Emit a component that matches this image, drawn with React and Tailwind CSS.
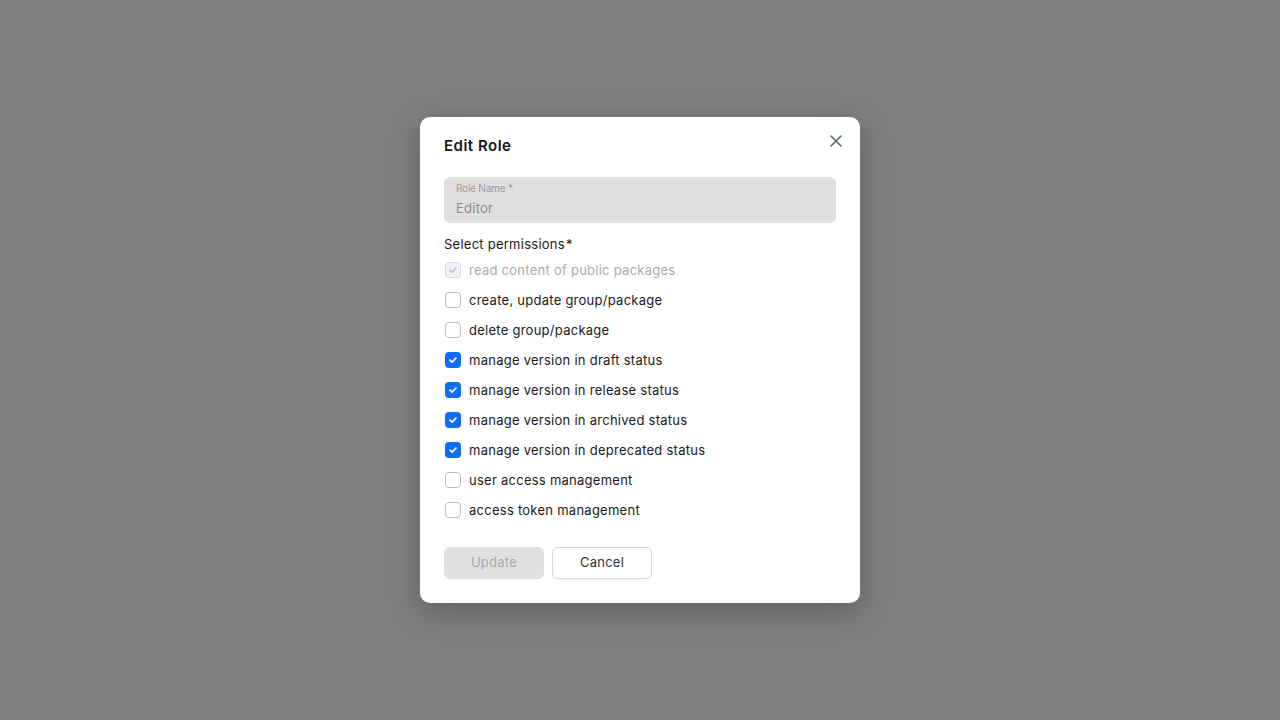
import React from "react";

const perms = [
  { label: "read content of public packages", state: "disabled" },
  { label: "create, update group/package", state: "off" },
  { label: "delete group/package", state: "off" },
  { label: "manage version in draft status", state: "on" },
  { label: "manage version in release status", state: "on" },
  { label: "manage version in archived status", state: "on" },
  { label: "manage version in deprecated status", state: "on" },
  { label: "user access management", state: "off" },
  { label: "access token management", state: "off" },
];

function Box({ state }) {
  if (state === "on") {
    return (
      <span className="w-4 h-4 rounded-[4px] bg-[#0d6efd] flex items-center justify-center">
        <svg width="10" height="10" viewBox="0 0 10 10" fill="none">
          <path d="M2 5.2L4.1 7.2L8 3" stroke="white" strokeWidth="1.7" strokeLinecap="round" strokeLinejoin="round" />
        </svg>
      </span>
    );
  }
  if (state === "disabled") {
    return (
      <span className="w-4 h-4 rounded-[4px] border border-[#d6d8dd] bg-[#f1f2f4] flex items-center justify-center">
        <svg width="10" height="10" viewBox="0 0 10 10" fill="none">
          <path d="M2 5.2L4.1 7.2L8 3" stroke="#b9bcc2" strokeWidth="1.5" strokeLinecap="round" strokeLinejoin="round" />
        </svg>
      </span>
    );
  }
  return <span className="w-4 h-4 rounded-[4px] border border-[#b9bec8] bg-white" />;
}

export default function App() {
  return (
    <div
      className="w-[1280px] h-[720px] bg-[#7f7f80] flex items-center justify-center"
      style={{ fontFamily: "Inter, 'Noto Sans', sans-serif" }}
    >
      <div className="w-[440px] bg-white rounded-[10px] shadow-[0_8px_30px_rgba(0,0,0,0.25)] px-6 pt-[19px] pb-6 relative">
        <button className="absolute right-[17px] top-[17px] text-[#5b6675]">
          <svg width="14" height="14" viewBox="0 0 14 14" fill="none">
            <path d="M2 2L12 12M12 2L2 12" stroke="currentColor" strokeWidth="1.6" strokeLinecap="round" />
          </svg>
        </button>
        <div className="text-[15px] font-semibold text-[#141414] leading-[20px] tracking-[0.5px]">Edit Role</div>
        <div className="mt-[21px] h-[46px] bg-[#e0e0e0] rounded-[6px] px-3 pt-[4px]">
          <div className="text-[10px] leading-[14px] text-[#9a9a9a] tracking-[-0.2px]">Role Name *</div>
          <div className="text-[13px] leading-[20px] text-[#8c8c8c] mt-[3px] tracking-[0.25px]">Editor</div>
        </div>
        <div className="mt-[12px] text-[13px] leading-[18px] text-[#1a1a1a] tracking-[0.25px]">
          Select permissions<span className="ml-[1px]">*</span>
        </div>
        <div className="mt-[2px] flex flex-col">
          {perms.map((p) => (
            <div key={p.label} className="h-[30px] flex items-center gap-2 pl-px">
              <Box state={p.state} />
              <span
                className={
                  "text-[13px] leading-[18px] tracking-[0.26px] " +
                  (p.state === "disabled" ? "text-[#a9abaf]" : "text-[#1a1a1a]")
                }
              >
                {p.label}
              </span>
            </div>
          ))}
        </div>
        <div className="mt-[22px] flex gap-2">
          <button className="w-[100px] h-8 rounded-[6px] bg-[#e0e0e0] text-[13px] text-[#a9a9a9] tracking-[0.25px]">Update</button>
          <button className="w-[100px] h-8 rounded-[6px] bg-white border border-[#d3d8e2] text-[13px] text-[#2e3440] tracking-[0.25px] shadow-[0_1px_2px_rgba(0,0,0,0.05)]">
            Cancel
          </button>
        </div>
      </div>
    </div>
  );
}
